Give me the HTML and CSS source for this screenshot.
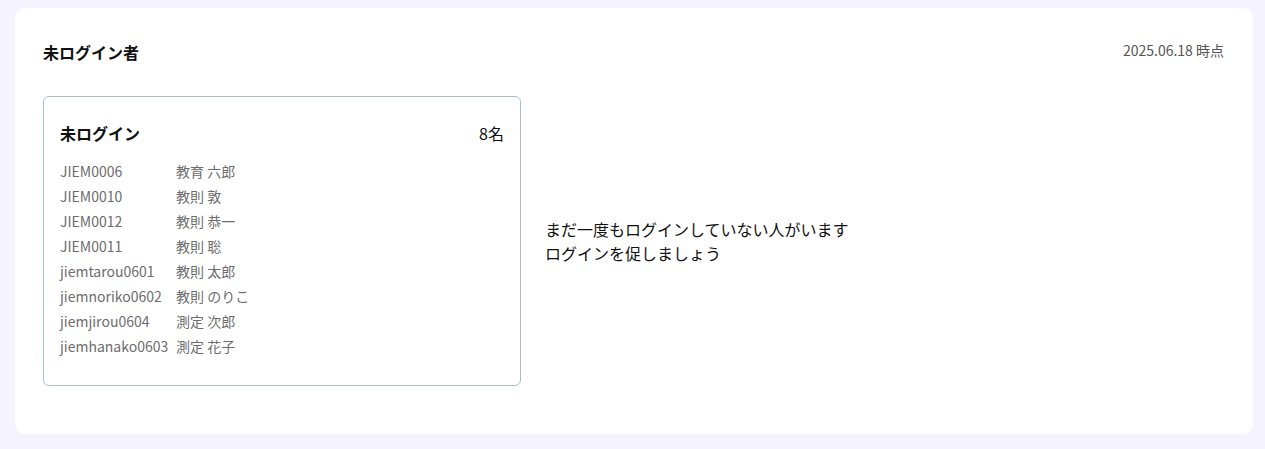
FILE: index.html
```html
<!DOCTYPE html>
<html lang="ja">
<head>
<meta charset="utf-8">
<link rel="stylesheet" href="styles.css">
</head>
<body>
<div class="page">
  <section class="panel">
    <div class="panel-head">
      <h2 class="panel-title">未ログイン者</h2>
      <span class="panel-date">2025.06.18 時点</span>
    </div>
    <div class="panel-body">
      <div class="card">
        <div class="card-head">
          <span class="card-title">未ログイン</span>
          <span class="card-count">8名</span>
        </div>
        <div class="user-list">
          <span class="uid">JIEM0006</span><span class="uname">教育 六郎</span>
          <span class="uid">JIEM0010</span><span class="uname">教則 敦</span>
          <span class="uid">JIEM0012</span><span class="uname">教則 恭一</span>
          <span class="uid">JIEM0011</span><span class="uname">教則 聡</span>
          <span class="uid">jiemtarou0601</span><span class="uname">教則 太郎</span>
          <span class="uid">jiemnoriko0602</span><span class="uname">教則 のりこ</span>
          <span class="uid">jiemjirou0604</span><span class="uname">測定 次郎</span>
          <span class="uid">jiemhanako0603</span><span class="uname">測定 花子</span>
        </div>
      </div>
      <p class="message">まだ一度もログインしていない人がいます<br>ログインを促しましょう</p>
    </div>
  </section>
</div>
</body>
</html>
```
FILE: styles.css
```css
* { box-sizing: border-box; }
html, body { margin: 0; padding: 0; }
body {
  background: #f5f3ff;
  font-family: "Noto Sans CJK JP", "Noto Sans", sans-serif;
  color: #111;
}
.page {
  padding: 8px 12px 15px 15px;
}
.panel {
  background: #fff;
  border-radius: 10px;
  padding: 29px 29px 48px 28px;
  min-height: 426px;
}
.panel-head {
  display: flex;
  justify-content: space-between;
  align-items: center;
  height: 30px;
}
.panel-title {
  margin: 0;
  font-size: 16px;
  font-weight: 700;
  line-height: 24px;
}
.panel-date {
  font-size: 14px;
  color: #555;
  line-height: 20px;
  position: relative;
  top: -2px;
}
.panel-body {
  display: flex;
  align-items: center;
  gap: 24px;
  margin-top: 29px;
}
.card {
  width: 478px;
  border: 1px solid #a9bfc7;
  border-radius: 6px;
  padding: 24px 16px 26px 16px;
}
.card-head {
  display: flex;
  justify-content: space-between;
  align-items: center;
  line-height: 24px;
  font-size: 16px;
}
.card-title { font-weight: 700; }
.card-count { font-weight: 400; }
.user-list {
  display: grid;
  grid-template-columns: 116px 1fr;
  margin-top: 14px;
  font-size: 14px;
  line-height: 25px;
  color: #6d6d6d;
}
.message {
  margin: 0;
  font-size: 16px;
  line-height: 24px;
  color: #111;
}
```
